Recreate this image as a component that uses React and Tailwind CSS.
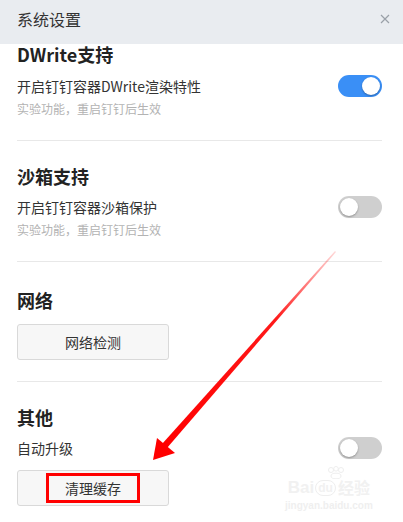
import React, { useState } from "react";

const FONT = { fontFamily: '"Noto Sans CJK SC", "Noto Sans", sans-serif' };
const ARIAL = { fontFamily: '"Liberation Sans", sans-serif' };

const Toggle = ({ on }) => (
  <div
    className={`relative w-[44px] h-[22px] rounded-full flex items-center px-[2px] ${
      on ? "bg-[#3a8ff6] justify-end" : "bg-[#cfcfcf] justify-start"
    }`}
  >
    <div className="w-[18px] h-[18px] rounded-full bg-white shadow-[0_1px_2px_rgba(0,0,0,0.3)]" />
  </div>
);

const Heading = ({ children, className }) => (
  <div className={`text-[18px] leading-[20px] font-bold text-[#222] ${className}`}>
    {children}
  </div>
);

const Row = ({ label, on, className }) => (
  <div className={`flex items-center justify-between h-[22px] ${className}`}>
    <span className="text-[14px] text-[#333]">{label}</span>
    <Toggle on={on} />
  </div>
);

const Sub = ({ children }) => (
  <div className="mt-[4px] text-[12px] leading-[16px] text-[#b3b3b3]">{children}</div>
);

const Divider = ({ className }) => <div className={`h-px bg-[#e8e8e8] ${className}`} />;

const GreyButton = ({ children, className }) => (
  <button className={`w-[152px] h-[36px] flex items-center justify-center bg-[#f7f7f7] border border-[#d9d9d9] rounded-[3px] text-[14px] text-[#333] ${className}`}>
    {children}
  </button>
);

export default function App() {
  const [settings] = useState({ dwrite: true, sandbox: false, autoUpdate: false });

  return (
    <div className="relative w-[403px] h-[522px] bg-white overflow-hidden" style={FONT}>
      {/* header */}
      <div className="h-[44px] bg-[#e9ecf0] flex items-center justify-between pl-[17px] pr-[13px] pb-[6px]">
        <span className="text-[16px] text-[#333]">系统设置</span>
        <svg width="10" height="10" viewBox="0 0 10 10">
          <path d="M1 1 L9 9 M9 1 L1 9" stroke="#9aa0a8" strokeWidth="1.2" />
        </svg>
      </div>

      <div className="pl-[17px] pr-[21px]">
        <Heading>DWrite支持</Heading>
        <Row className="mt-[11px]" label="开启钉钉容器DWrite渲染特性" on={settings.dwrite} />
        <Sub>实验功能，重启钉钉后生效</Sub>
        <Divider className="mt-[23px]" />

        <Heading className="mt-[25px]">沙箱支持</Heading>
        <Row className="mt-[10px]" label="开启钉钉容器沙箱保护" on={settings.sandbox} />
        <Sub>实验功能，重启钉钉后生效</Sub>
        <Divider className="mt-[23px]" />

        <Heading className="mt-[28px]">网络</Heading>
        <GreyButton className="mt-[14px]">网络检测</GreyButton>
        <Divider className="mt-[21px]" />

        <Heading className="mt-[25px]">其他</Heading>
        <Row className="mt-[10px]" label="自动升级" on={settings.autoUpdate} />
        <GreyButton className="mt-[11px]">
          <span className="w-[94px] h-[30px] border-[3px] border-[#f00] flex items-center justify-center">
            清理缓存
          </span>
        </GreyButton>
      </div>

      {/* watermark */}
      <div className="absolute left-[285px] top-[466px] flex flex-col items-center pointer-events-none">
        <svg width="20" height="13" viewBox="0 0 20 13" className="ml-[14px]">
          <g fill="none" stroke="#eeeeee" strokeWidth="1">
            <circle cx="5" cy="4" r="2.5" />
            <circle cx="10" cy="2.8" r="2.3" />
            <circle cx="15" cy="4" r="2.5" />
            <ellipse cx="10" cy="10" rx="5" ry="2.8" />
          </g>
        </svg>
        <div className="flex items-center text-[17px] leading-[17px] font-bold text-[#f1f1f1]" style={ARIAL}>
          <span>Bai</span>
          <span className="mx-[1px] px-[2px] rounded-full border border-[#eeeeee] text-[12px] leading-[14px]">du</span>
          <span className="text-[16px] ml-[1px]" style={FONT}>经验</span>
        </div>
        <div className="text-[10px] leading-[12px] mt-[4px] text-[#efefef] font-bold" style={ARIAL}>
          jingyan.baidu.com
        </div>
      </div>

      {/* red arrow annotation */}
      <svg className="absolute inset-0 pointer-events-none" width="403" height="522">
        <defs>
          <linearGradient id="fade" x1="335" y1="251" x2="165" y2="445" gradientUnits="userSpaceOnUse">
            <stop offset="0" stopColor="#ff0000" stopOpacity="0.15" />
            <stop offset="0.35" stopColor="#ff0000" stopOpacity="0.9" />
            <stop offset="1" stopColor="#ff0000" stopOpacity="1" />
          </linearGradient>
        </defs>
        <polygon points="335,251 336,252 167,448 162,444" fill="url(#fade)" />
        <polygon points="153,460 157,438 175,453" fill="#ff0000" />
      </svg>
    </div>
  );
}
